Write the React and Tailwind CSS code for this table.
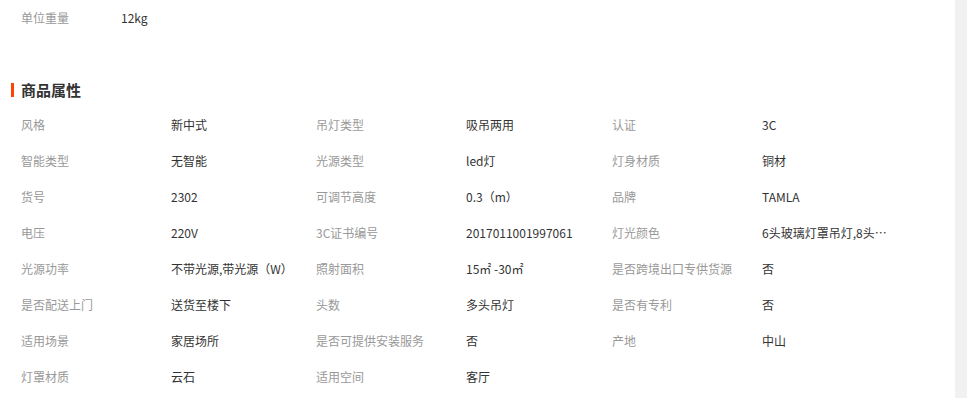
const attrs = [
  ["风格", "新中式", "吊灯类型", "吸吊两用", "认证", "3C"],
  ["智能类型", "无智能", "光源类型", "led灯", "灯身材质", "铜材"],
  ["货号", "2302", "可调节高度", "0.3（m）", "品牌", "TAMLA"],
  ["电压", "220V", "3C证书编号", "2017011001997061", "灯光颜色", "6头玻璃灯罩吊灯,8头玻璃灯罩吊灯"],
  ["光源功率", "不带光源,带光源（W）", "照射面积", "15㎡ -30㎡", "是否跨境出口专供货源", "否"],
  ["是否配送上门", "送货至楼下", "头数", "多头吊灯", "是否有专利", "否"],
  ["适用场景", "家居场所", "是否可提供安装服务", "否", "产地", "中山"],
  ["灯罩材质", "云石", "适用空间", "客厅", "", ""],
];

function Cell({ label, value }) {
  return (
    <div className="flex h-9 items-center">
      <span className="w-[150px] shrink-0 text-[#999]">{label}</span>
      <span className="w-[132px] truncate text-[#333]">{value}</span>
    </div>
  );
}

export default function App() {
  return (
    <div
      className="flex h-[398px] w-[967px] bg-white text-[12px]"
      style={{ fontFamily: '"Noto Sans CJK SC", "Noto Sans", sans-serif' }}
    >
      <div className="flex-1">
        <div className="flex h-9 items-center pl-[21px]">
          <span className="w-[100px] text-[#999]">单位重量</span>
          <span className="text-[#333]">12kg</span>
        </div>
        <div className="mt-[38px] flex items-center gap-[7px] pl-[11px]">
          <span className="h-[14px] w-[3px] bg-[#ff4400]" />
          <h2 className="text-[15px] font-bold leading-8 text-[#333]">商品属性</h2>
        </div>
        <div className="mt-px grid grid-cols-[295px_296px_295px] pl-[21px]">
          {attrs.map((r, i) => (
            <div key={i} className="contents">
              <Cell label={r[0]} value={r[1]} />
              <Cell label={r[2]} value={r[3]} />
              <Cell label={r[4]} value={r[5]} />
            </div>
          ))}
        </div>
      </div>
      <div className="w-3 bg-[#f1f1f1]" />
    </div>
  );
}
